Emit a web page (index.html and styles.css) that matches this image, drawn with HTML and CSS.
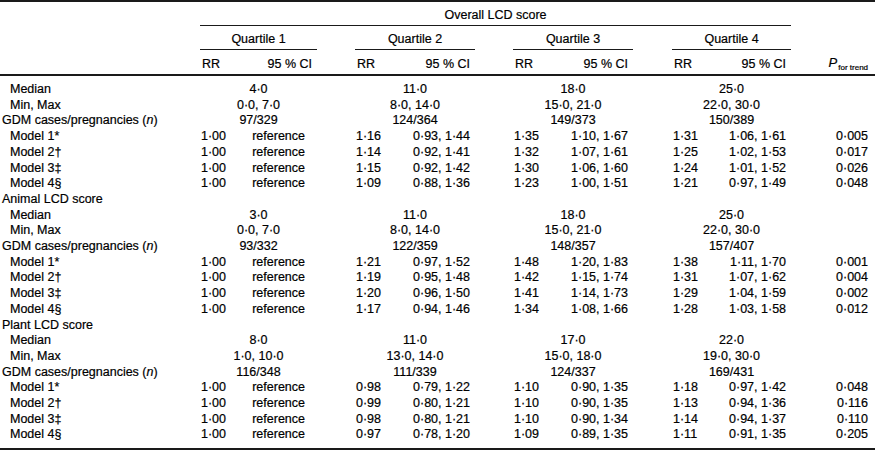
FILE: index.html
```html
<!DOCTYPE html>
<html>
<head>
<meta charset="utf-8">
<link rel="stylesheet" href="styles.css">
</head>
<body>
<table class="t">
<colgroup>
<col class="c-label"><col class="c-rr"><col class="c-ci1"><col class="c-gap"><col class="c-rr"><col class="c-ci"><col class="c-gap"><col class="c-rr"><col class="c-ci"><col class="c-gap3"><col class="c-rr"><col class="c-ci4"><col class="c-p">
</colgroup>
<thead>
<tr class="h1">
<th></th><th colspan="11" class="ln">Overall LCD score</th><th></th>
</tr>
<tr class="h2">
<th></th><th colspan="2" class="ln">Quartile 1</th><th></th><th colspan="2" class="ln">Quartile 2</th><th></th><th colspan="2" class="ln">Quartile 3</th><th></th><th colspan="2" class="ln">Quartile 4</th><th></th>
</tr>
<tr class="h3">
<th></th><th class="rr">RR</th><th class="ci">95 % CI</th><th></th><th class="rr">RR</th><th class="ci">95 % CI</th><th></th><th class="rr">RR</th><th class="ci">95 % CI</th><th></th><th class="rr">RR</th><th class="ci">95 % CI</th><th class="p"><i>P</i><sub>for trend</sub></th>
</tr>
</thead>
<tbody>
<tr class="first"><td class="ind">Median</td><td colspan="2" class="mid">4·0</td><td></td><td colspan="2" class="mid">11·0</td><td></td><td colspan="2" class="mid">18·0</td><td></td><td colspan="2" class="mid">25·0</td><td></td></tr>
<tr><td class="ind">Min, Max</td><td colspan="2" class="mid">0·0, 7·0</td><td></td><td colspan="2" class="mid">8·0, 14·0</td><td></td><td colspan="2" class="mid">15·0, 21·0</td><td></td><td colspan="2" class="mid">22·0, 30·0</td><td></td></tr>
<tr><td>GDM cases/pregnancies (<i>n</i>)</td><td colspan="2" class="mid">97/329</td><td></td><td colspan="2" class="mid">124/364</td><td></td><td colspan="2" class="mid">149/373</td><td></td><td colspan="2" class="mid">150/389</td><td></td></tr>
<tr><td class="ind">Model 1*</td><td class="rr">1·00</td><td class="ref">reference</td><td></td><td class="rr">1·16</td><td class="ci">0·93, 1·44</td><td></td><td class="rr">1·35</td><td class="ci">1·10, 1·67</td><td></td><td class="rr">1·31</td><td class="ci">1·06, 1·61</td><td class="p">0·005</td></tr>
<tr><td class="ind">Model 2†</td><td class="rr">1·00</td><td class="ref">reference</td><td></td><td class="rr">1·14</td><td class="ci">0·92, 1·41</td><td></td><td class="rr">1·32</td><td class="ci">1·07, 1·61</td><td></td><td class="rr">1·25</td><td class="ci">1·02, 1·53</td><td class="p">0·017</td></tr>
<tr><td class="ind">Model 3‡</td><td class="rr">1·00</td><td class="ref">reference</td><td></td><td class="rr">1·15</td><td class="ci">0·92, 1·42</td><td></td><td class="rr">1·30</td><td class="ci">1·06, 1·60</td><td></td><td class="rr">1·24</td><td class="ci">1·01, 1·52</td><td class="p">0·026</td></tr>
<tr><td class="ind">Model 4§</td><td class="rr">1·00</td><td class="ref">reference</td><td></td><td class="rr">1·09</td><td class="ci">0·88, 1·36</td><td></td><td class="rr">1·23</td><td class="ci">1·00, 1·51</td><td></td><td class="rr">1·21</td><td class="ci">0·97, 1·49</td><td class="p">0·048</td></tr>
<tr><td>Animal LCD score</td><td colspan="12"></td></tr>
<tr><td class="ind">Median</td><td colspan="2" class="mid">3·0</td><td></td><td colspan="2" class="mid">11·0</td><td></td><td colspan="2" class="mid">18·0</td><td></td><td colspan="2" class="mid">25·0</td><td></td></tr>
<tr><td class="ind">Min, Max</td><td colspan="2" class="mid">0·0, 7·0</td><td></td><td colspan="2" class="mid">8·0, 14·0</td><td></td><td colspan="2" class="mid">15·0, 21·0</td><td></td><td colspan="2" class="mid">22·0, 30·0</td><td></td></tr>
<tr><td>GDM cases/pregnancies (<i>n</i>)</td><td colspan="2" class="mid">93/332</td><td></td><td colspan="2" class="mid">122/359</td><td></td><td colspan="2" class="mid">148/357</td><td></td><td colspan="2" class="mid">157/407</td><td></td></tr>
<tr><td class="ind">Model 1*</td><td class="rr">1·00</td><td class="ref">reference</td><td></td><td class="rr">1·21</td><td class="ci">0·97, 1·52</td><td></td><td class="rr">1·48</td><td class="ci">1·20, 1·83</td><td></td><td class="rr">1·38</td><td class="ci">1·11, 1·70</td><td class="p">0·001</td></tr>
<tr><td class="ind">Model 2†</td><td class="rr">1·00</td><td class="ref">reference</td><td></td><td class="rr">1·19</td><td class="ci">0·95, 1·48</td><td></td><td class="rr">1·42</td><td class="ci">1·15, 1·74</td><td></td><td class="rr">1·31</td><td class="ci">1·07, 1·62</td><td class="p">0·004</td></tr>
<tr><td class="ind">Model 3‡</td><td class="rr">1·00</td><td class="ref">reference</td><td></td><td class="rr">1·20</td><td class="ci">0·96, 1·50</td><td></td><td class="rr">1·41</td><td class="ci">1·14, 1·73</td><td></td><td class="rr">1·29</td><td class="ci">1·04, 1·59</td><td class="p">0·002</td></tr>
<tr><td class="ind">Model 4§</td><td class="rr">1·00</td><td class="ref">reference</td><td></td><td class="rr">1·17</td><td class="ci">0·94, 1·46</td><td></td><td class="rr">1·34</td><td class="ci">1·08, 1·66</td><td></td><td class="rr">1·28</td><td class="ci">1·03, 1·58</td><td class="p">0·012</td></tr>
<tr><td>Plant LCD score</td><td colspan="12"></td></tr>
<tr><td class="ind">Median</td><td colspan="2" class="mid">8·0</td><td></td><td colspan="2" class="mid">11·0</td><td></td><td colspan="2" class="mid">17·0</td><td></td><td colspan="2" class="mid">22·0</td><td></td></tr>
<tr><td class="ind">Min, Max</td><td colspan="2" class="mid">1·0, 10·0</td><td></td><td colspan="2" class="mid">13·0, 14·0</td><td></td><td colspan="2" class="mid">15·0, 18·0</td><td></td><td colspan="2" class="mid">19·0, 30·0</td><td></td></tr>
<tr><td>GDM cases/pregnancies (<i>n</i>)</td><td colspan="2" class="mid">116/348</td><td></td><td colspan="2" class="mid">111/339</td><td></td><td colspan="2" class="mid">124/337</td><td></td><td colspan="2" class="mid">169/431</td><td></td></tr>
<tr><td class="ind">Model 1*</td><td class="rr">1·00</td><td class="ref">reference</td><td></td><td class="rr">0·98</td><td class="ci">0·79, 1·22</td><td></td><td class="rr">1·10</td><td class="ci">0·90, 1·35</td><td></td><td class="rr">1·18</td><td class="ci">0·97, 1·42</td><td class="p">0·048</td></tr>
<tr><td class="ind">Model 2†</td><td class="rr">1·00</td><td class="ref">reference</td><td></td><td class="rr">0·99</td><td class="ci">0·80, 1·21</td><td></td><td class="rr">1·10</td><td class="ci">0·90, 1·35</td><td></td><td class="rr">1·13</td><td class="ci">0·94, 1·36</td><td class="p">0·116</td></tr>
<tr><td class="ind">Model 3‡</td><td class="rr">1·00</td><td class="ref">reference</td><td></td><td class="rr">0·98</td><td class="ci">0·80, 1·21</td><td></td><td class="rr">1·10</td><td class="ci">0·90, 1·34</td><td></td><td class="rr">1·14</td><td class="ci">0·94, 1·37</td><td class="p">0·110</td></tr>
<tr class="last"><td class="ind">Model 4§</td><td class="rr">1·00</td><td class="ref">reference</td><td></td><td class="rr">0·97</td><td class="ci">0·78, 1·20</td><td></td><td class="rr">1·09</td><td class="ci">0·89, 1·35</td><td></td><td class="rr">1·11</td><td class="ci">0·91, 1·35</td><td class="p">0·205</td></tr>
</tbody>
</table>
</body>
</html>
```
FILE: styles.css
```css
html, body {
  margin: 0;
  padding: 0;
  background: #ffffff;
}
body {
  font-family: "Liberation Sans", Arial, sans-serif;
  font-size: 12.5px;
  color: #000;
  -webkit-text-stroke: 0.2px #000;
}
.t {
  width: 875px;
  table-layout: fixed;
  border-collapse: separate;
  border-spacing: 0;
  border-top: 2px solid #1a1a1a;
  border-bottom: 2px solid #1a1a1a;
}
.c-label { width: 200px; }
.c-rr { width: 42px; }
.c-ci1 { width: 75px; }
.c-ci { width: 78px; }
.c-ci4 { width: 77px; }
.c-gap { width: 38px; }
.c-gap3 { width: 39px; }
.c-p { width: 84px; }
th, td {
  padding: 0;
  font-weight: normal;
  white-space: nowrap;
  overflow: visible;
}
thead th {
  text-align: center;
  vertical-align: middle;
  padding-top: 3px;
}
.h1 th { height: 20px; }
.h2 th { height: 21px; }
.h3 th {
  height: 21px;
  border-bottom: 2px solid #1a1a1a;
}
.ln { border-bottom: 1px solid #1a1a1a; }
.h1 th.ln, .h2 th.ln { height: 20px; }
th.rr, td.rr {
  text-align: left;
  padding-left: 2px;
}
th.ci, td.ci {
  text-align: right;
  padding-right: 5px;
}
td.ref {
  text-align: right;
  padding-right: 12px;
}
th.p, td.p {
  text-align: right;
  padding-right: 7px;
}
th.p i { font-style: italic; font-size: 13px; }
th.p sub {
  font-size: 8px;
  vertical-align: -3px;
  margin-left: 1px;
}
tbody td {
  height: 15.7px;
  line-height: 15.7px;
  text-align: left;
  padding-left: 2px;
}
tbody td.ind { padding-left: 10px; }
tbody td.mid {
  text-align: center;
  padding-left: 0;
}
tbody td.rr { padding-left: 1px; }
tbody td.ci, tbody td.ref, tbody td.p { padding-left: 0; }
tbody tr.first td { padding-top: 6px; }
tbody tr.last td { padding-bottom: 5px; }
```
